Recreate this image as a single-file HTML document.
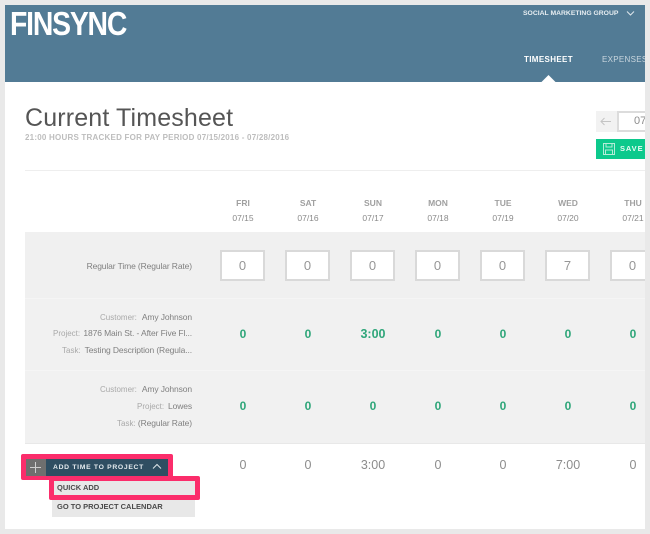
<!DOCTYPE html>
<html><head><meta charset="utf-8">
<style>
html,body{margin:0;padding:0}
body{width:650px;height:534px;background:#e9e9e9;position:relative;overflow:hidden;font-family:"Liberation Sans",sans-serif}
#f{position:absolute;left:0;top:0;width:650px;height:534px;filter:blur(.35px);overflow:hidden}
#page{position:absolute;left:5px;top:5px;width:640px;height:524px;background:#fff;overflow:hidden}
.a{position:absolute;white-space:nowrap}
.c{position:absolute;white-space:nowrap;text-align:center;width:60px}
.r{position:absolute;white-space:nowrap;text-align:right;left:0;width:192px}
.d{font-size:8.5px;font-weight:bold;color:#a0a0a0;line-height:12px}
.dt{font-size:8.5px;color:#8a8a8a;line-height:12px}
.inp{position:absolute;width:41px;height:27px;border:2px solid #d9d9d9;background:#fff;top:250px;text-align:center;font-size:13px;line-height:27px;color:#969696}
.g{font-size:12px;font-weight:bold;color:#2fa67a;line-height:14px}
.t{font-size:12.5px;color:#8c8c8c;line-height:14px}
.l{font-size:8px;color:#a9a9a9;line-height:12px}
.v{font-size:8.5px;color:#808080;line-height:12px;letter-spacing:-.12px}
.bg{position:absolute;background:#f1f1f1;left:25px;width:620px}
</style></head><body>
<div id="f">
<div id="page"></div>
<div class="a" style="left:5px;top:5px;width:640px;height:77px;background:#527b95"></div>
<div class="a" style="left:10px;top:5px;font-size:33px;line-height:38px;font-weight:bold;color:#fff;letter-spacing:-1.4px;transform:scaleX(.86);transform-origin:0 0">FINSYNC</div>
<div class="a" style="left:523px;top:8px;font-size:6.8px;line-height:11px;font-weight:bold;color:#e6edf1">SOCIAL MARKETING GROUP</div>
<svg class="a" style="left:626px;top:10px" width="9" height="7" viewBox="0 0 9 7"><path d="M1 1.5L4.5 5L8 1.5" fill="none" stroke="#dfe7ec" stroke-width="1"/></svg>
<div class="a" style="left:524px;top:54px;font-size:8px;line-height:12px;font-weight:bold;color:#fff;letter-spacing:.35px">TIMESHEET</div>
<div class="a" style="left:602px;top:54px;width:43px;overflow:hidden;font-size:8px;line-height:12px;color:#c9d6de;letter-spacing:.3px">EXPENSES</div>
<svg class="a" style="left:540px;top:74px" width="17" height="9"><path d="M1 8.5L8.5 1L16 8.5Z" fill="#fff"/></svg>

<div class="a" style="left:25px;top:102px;font-size:25px;line-height:32px;color:#555;letter-spacing:.15px">Current Timesheet</div>
<div class="a" style="left:25px;top:132px;font-size:8px;line-height:12px;font-weight:bold;color:#bdbdbd;letter-spacing:.22px">21:00 HOURS TRACKED FOR PAY PERIOD 07/15/2016 - 07/28/2016</div>
<div class="a" style="left:25px;top:170px;width:620px;height:1px;background:#eee"></div>

<div class="a" style="left:596px;top:111px;width:21px;height:21px;background:#f2f2f2"></div>
<svg class="a" style="left:600px;top:117px" width="12" height="9"><path d="M11 4.5H1M4.5 1L1 4.5L4.5 8" fill="none" stroke="#c4c4c4" stroke-width="1"/></svg>
<div class="a" style="left:617px;top:111px;width:26px;height:17px;border:2px solid #dcdcdc;border-right:0;background:#fff;font-size:11px;line-height:17px;color:#8c8c8c;text-indent:15px;overflow:hidden">07</div>
<div class="a" style="left:596px;top:139px;width:49px;height:20px;background:#0dc98c"></div>
<svg class="a" style="left:603px;top:143px" width="12" height="12" viewBox="0 0 12 12"><path d="M.5.5H11.5V11.5H.5ZM3 .5V4H9V.5M2.5 11.5V7H9.5V11.5" fill="none" stroke="#b5ecd8" stroke-width="1"/></svg>
<div class="a" style="left:620px;top:143px;width:25px;overflow:hidden;font-size:7.5px;line-height:12px;font-weight:bold;color:#e8fbf4;letter-spacing:.9px">SAVE T</div>

<div class="c d" style="left:213px;top:197px">FRI</div>
<div class="c d" style="left:278px;top:197px">SAT</div>
<div class="c d" style="left:343px;top:197px">SUN</div>
<div class="c d" style="left:408px;top:197px">MON</div>
<div class="c d" style="left:473px;top:197px">TUE</div>
<div class="c d" style="left:538px;top:197px">WED</div>
<div class="c d" style="left:603px;top:197px">THU</div>
<div class="c dt" style="left:213px;top:212px">07/15</div>
<div class="c dt" style="left:278px;top:212px">07/16</div>
<div class="c dt" style="left:343px;top:212px">07/17</div>
<div class="c dt" style="left:408px;top:212px">07/18</div>
<div class="c dt" style="left:473px;top:212px">07/19</div>
<div class="c dt" style="left:538px;top:212px">07/20</div>
<div class="c dt" style="left:603px;top:212px">07/21</div>

<div class="bg" style="top:232px;height:212px;background:#f5f5f5"></div>
<div class="bg" style="top:232px;height:66px;background:#f0f0f0"></div>
<div class="bg" style="top:299px;height:71px"></div>
<div class="bg" style="top:371px;height:72px"></div>
<div class="bg" style="top:443px;height:1px;background:#e8e8e8"></div>

<div class="r v" style="top:260px">Regular Time (Regular Rate)</div>
<div class="inp" style="left:220px">0</div>
<div class="inp" style="left:285px">0</div>
<div class="inp" style="left:350px">0</div>
<div class="inp" style="left:415px">0</div>
<div class="inp" style="left:480px">0</div>
<div class="inp" style="left:545px">7</div>
<div class="inp" style="left:610px;width:33px;border-right:0;text-indent:8px">0</div>

<div class="a l" style="left:100px;top:312px">Customer:</div><div class="r v" style="top:311px">Amy Johnson</div>
<div class="a l" style="left:53px;top:328px">Project:</div><div class="r v" style="top:327px">1876 Main St. - After Five Fl...</div>
<div class="a l" style="left:62px;top:345px">Task:</div><div class="r v" style="top:344px">Testing Description (Regula...</div>

<div class="c g" style="left:213px;top:327px">0</div>
<div class="c g" style="left:278px;top:327px">0</div>
<div class="c g" style="left:343px;top:327px;font-size:12.5px">3:00</div>
<div class="c g" style="left:408px;top:327px">0</div>
<div class="c g" style="left:473px;top:327px">0</div>
<div class="c g" style="left:538px;top:327px">0</div>
<div class="c g" style="left:603px;top:327px">0</div>

<div class="a l" style="left:100px;top:384px">Customer:</div><div class="r v" style="top:383px">Amy Johnson</div>
<div class="a l" style="left:137px;top:401px">Project:</div><div class="r v" style="top:400px">Lowes</div>
<div class="a l" style="left:117px;top:418px">Task:</div><div class="r v" style="top:417px">(Regular Rate)</div>

<div class="c g" style="left:213px;top:399px">0</div>
<div class="c g" style="left:278px;top:399px">0</div>
<div class="c g" style="left:343px;top:399px">0</div>
<div class="c g" style="left:408px;top:399px">0</div>
<div class="c g" style="left:473px;top:399px">0</div>
<div class="c g" style="left:538px;top:399px">0</div>
<div class="c g" style="left:603px;top:399px">0</div>

<div class="c t" style="left:213px;top:458px">0</div>
<div class="c t" style="left:278px;top:458px">0</div>
<div class="c t" style="left:343px;top:458px">3:00</div>
<div class="c t" style="left:408px;top:458px">0</div>
<div class="c t" style="left:473px;top:458px">0</div>
<div class="c t" style="left:538px;top:458px">7:00</div>
<div class="c t" style="left:603px;top:458px">0</div>

<div class="a" style="left:21px;top:454px;width:152px;height:26px;background:#fb2d6b;border-radius:2px"></div>
<div class="a" style="left:26px;top:459px;width:20px;height:17px;background:#6f6f6f"></div>
<svg class="a" style="left:29px;top:461px" width="13" height="13"><path d="M6.5 1V12M1 6.5H12" stroke="#cfcfcf" stroke-width="1" fill="none"/></svg>
<div class="a" style="left:46px;top:459px;width:122px;height:17px;background:#2f4e62"></div>
<div class="a" style="left:53px;top:462px;font-size:6.8px;line-height:11px;font-weight:bold;color:#e4eaee;letter-spacing:.68px">ADD TIME TO PROJECT</div>
<svg class="a" style="left:152px;top:463px" width="10" height="7"><path d="M1 5.5L5 1.5L9 5.5" fill="none" stroke="#dfe6ea" stroke-width="1"/></svg>

<div class="a" style="left:52px;top:497px;width:143px;height:20px;background:#e8e8e8"></div>
<div class="a" style="left:49px;top:476px;width:151px;height:24px;background:#fb2d6b;border-radius:2px"></div>
<div class="a" style="left:54px;top:481px;width:141px;height:14px;background:#e8e8e8"></div>
<div class="a" style="left:57px;top:482px;font-size:7.5px;line-height:12px;font-weight:bold;color:#4a4a4a">QUICK ADD</div>
<div class="a" style="left:57px;top:501px;font-size:7.5px;line-height:12px;font-weight:bold;color:#4a4a4a">GO TO PROJECT CALENDAR</div>
<div class="a" style="left:645px;top:0;width:5px;height:534px;background:#e9e9e9"></div>
</div>
</body></html>
